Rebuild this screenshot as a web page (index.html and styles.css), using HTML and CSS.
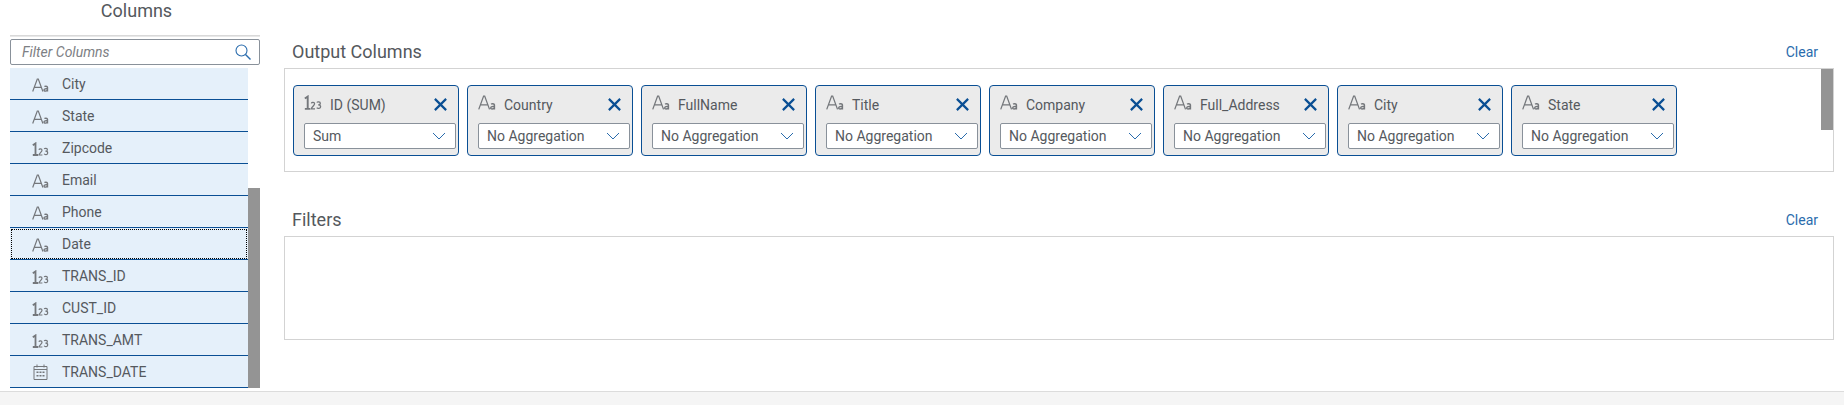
FILE: index.html
```html
<!DOCTYPE html>
<html lang="en">
<head>
<meta charset="utf-8">
<title>Columns</title>
<link rel="stylesheet" href="styles.css">
</head>
<body>
<svg class="sprite" width="0" height="0" aria-hidden="true">
  <symbol id="i-text" viewBox="0 0 17 14">
    <path d="M.7 13.500 5.300 1h1l4.600 12.500M2.300 9.300h7.400" fill="none" stroke="currentColor" stroke-width="1.200"/>
    <path d="M12.400 8.600c.5-.5 2.900-.8 3.100.7v4.200M15.500 10.800c-1.600-.2-3.500.1-3.500 1.300 0 1.500 2.500 1.300 3.500 0" fill="none" stroke="currentColor" stroke-width="1.400"/>
  </symbol>
  <symbol id="i-num" viewBox="0 0 17 14">
    <path d="M.8 3.200 3.500 1.400V13M.8 13h5.200" fill="none" stroke="currentColor" stroke-width="1.800"/>
    <path d="M6.900 7.800c.4-1.200 3.100-1.200 3.100.4 0 1.500-2.700 3-3.100 4.800h3.500M12.200 7c.5-.9 3.200-.9 3.200.7 0 1.100-1.100 1.500-2 1.500 1 0 2.300.4 2.300 1.800 0 1.900-2.900 2-3.600.8" fill="none" stroke="currentColor" stroke-width="1.200"/>
  </symbol>
  <symbol id="i-cal" viewBox="0 0 14 16">
    <path d="M.5 2.500h13v13H.5zM.5 5.500h13M3.500.5v3M10.500.5v3" fill="none" stroke="currentColor"/>
    <path d="M3 7.500h2v1.500H3zM6 7.500h2v1.500H6zM9 7.500h2v1.500H9zM3 11h2v1.500H3zM6 11h2v1.500H6zM9 11h2v1.500H9z" fill="currentColor"/>
  </symbol>
  <symbol id="i-x" viewBox="0 0 12 12">
    <path d="M.8.800l10.400 10.400M11.200.800.800 11.200" fill="none" stroke="currentColor" stroke-width="2"/>
  </symbol>
  <symbol id="i-chev" viewBox="0 0 14 8">
    <path d="M1 1l6 6 6-6" fill="none" stroke="currentColor"/>
  </symbol>
  <symbol id="i-search" viewBox="0 0 16 16">
    <circle cx="6.500" cy="6.500" r="5.500" fill="none" stroke="currentColor" stroke-width="1.100"/>
    <path d="M10.500 10.500l5 5" fill="none" stroke="currentColor" stroke-width="1.400"/>
  </symbol>
</svg>

<main class="page">
  <aside class="side">
    <h2 class="side-title">Columns</h2>
    <div class="search">
      <span class="search-text">Filter Columns</span>
      <svg class="search-icon"><use href="#i-search"/></svg>
    </div>
    <div class="list-wrap">
      <ul class="list">
        <li class="row"><svg class="type"><use href="#i-text"/></svg><span>City</span></li>
        <li class="row"><svg class="type"><use href="#i-text"/></svg><span>State</span></li>
        <li class="row"><svg class="type"><use href="#i-num"/></svg><span>Zipcode</span></li>
        <li class="row"><svg class="type"><use href="#i-text"/></svg><span>Email</span></li>
        <li class="row"><svg class="type"><use href="#i-text"/></svg><span>Phone</span></li>
        <li class="row row-focus"><svg class="type"><use href="#i-text"/></svg><span>Date</span></li>
        <li class="row"><svg class="type"><use href="#i-num"/></svg><span>TRANS_ID</span></li>
        <li class="row"><svg class="type"><use href="#i-num"/></svg><span>CUST_ID</span></li>
        <li class="row"><svg class="type"><use href="#i-num"/></svg><span>TRANS_AMT</span></li>
        <li class="row"><svg class="type type-cal"><use href="#i-cal"/></svg><span>TRANS_DATE</span></li>
      </ul>
      <div class="list-thumb"></div>
    </div>
  </aside>

  <section class="content">
    <div class="section-head head-output">
      <h3 class="section-title">Output Columns</h3>
      <a class="clear">Clear</a>
    </div>
    <div class="box box-output">
      <div class="card">
        <div class="card-top"><svg class="card-type"><use href="#i-num"/></svg><span class="card-name">ID (SUM)</span><svg class="card-x"><use href="#i-x"/></svg></div>
        <div class="select"><span>Sum</span><svg class="chev"><use href="#i-chev"/></svg></div>
      </div>
      <div class="card">
        <div class="card-top"><svg class="card-type"><use href="#i-text"/></svg><span class="card-name">Country</span><svg class="card-x"><use href="#i-x"/></svg></div>
        <div class="select"><span>No Aggregation</span><svg class="chev"><use href="#i-chev"/></svg></div>
      </div>
      <div class="card">
        <div class="card-top"><svg class="card-type"><use href="#i-text"/></svg><span class="card-name">FullName</span><svg class="card-x"><use href="#i-x"/></svg></div>
        <div class="select"><span>No Aggregation</span><svg class="chev"><use href="#i-chev"/></svg></div>
      </div>
      <div class="card">
        <div class="card-top"><svg class="card-type"><use href="#i-text"/></svg><span class="card-name">Title</span><svg class="card-x"><use href="#i-x"/></svg></div>
        <div class="select"><span>No Aggregation</span><svg class="chev"><use href="#i-chev"/></svg></div>
      </div>
      <div class="card">
        <div class="card-top"><svg class="card-type"><use href="#i-text"/></svg><span class="card-name">Company</span><svg class="card-x"><use href="#i-x"/></svg></div>
        <div class="select"><span>No Aggregation</span><svg class="chev"><use href="#i-chev"/></svg></div>
      </div>
      <div class="card">
        <div class="card-top"><svg class="card-type"><use href="#i-text"/></svg><span class="card-name">Full_Address</span><svg class="card-x"><use href="#i-x"/></svg></div>
        <div class="select"><span>No Aggregation</span><svg class="chev"><use href="#i-chev"/></svg></div>
      </div>
      <div class="card">
        <div class="card-top"><svg class="card-type"><use href="#i-text"/></svg><span class="card-name">City</span><svg class="card-x"><use href="#i-x"/></svg></div>
        <div class="select"><span>No Aggregation</span><svg class="chev"><use href="#i-chev"/></svg></div>
      </div>
      <div class="card">
        <div class="card-top"><svg class="card-type"><use href="#i-text"/></svg><span class="card-name">State</span><svg class="card-x"><use href="#i-x"/></svg></div>
        <div class="select"><span>No Aggregation</span><svg class="chev"><use href="#i-chev"/></svg></div>
      </div>
      <div class="box-thumb"></div>
    </div>
    <div class="section-head head-filters">
      <h3 class="section-title">Filters</h3>
      <a class="clear">Clear</a>
    </div>
    <div class="box box-filters"></div>
  </section>
</main>
<footer class="footer"></footer>
</body>
</html>
```

FILE: styles.css
```css
* { box-sizing: border-box; }
html, body { margin: 0; padding: 0; }
body {
  width: 1844px;
  height: 405px;
  overflow: hidden;
  background: #fff;
  color: #32363a;
  font-family: Roboto, "Liberation Sans", sans-serif;
  font-size: 14px;
}
.sprite { position: absolute; }

.page { display: flex; height: 391px; }

.side { width: 250px; margin-left: 10px; flex: none; }
.side-title {
  margin: 0;
  height: 36px;
  padding-left: 3px;
  border-bottom: 1px solid #d9d9d9;
  box-shadow: 0 1px 0 #e8e8e8;
  font-size: 18px;
  font-weight: 400;
  line-height: 21px;
  text-align: center;
  color: #54585d;
}
.search {
  display: flex;
  align-items: center;
  justify-content: space-between;
  height: 26px;
  margin-top: 3px;
  padding: 0 8px 0 11px;
  border: 1px solid #89919a;
  border-radius: 2px;
  background: #fff;
}
.search-text { font-style: italic; color: #7d8084; }
.search-icon { width: 16px; height: 16px; color: #2a6cad; }

.list-wrap { position: relative; margin-top: 3px; height: 320px; }
.list { margin: 0; padding: 0 12px 0 0; list-style: none; }
.row {
  display: flex;
  align-items: center;
  height: 32px;
  padding-left: 22px;
  background: #e5f0fa;
  border-bottom: 1px solid #0a4f94;
  color: #55595e;
}
.row-focus { outline: 1px dotted #000; outline-offset: -2px; }
.type { width: 17px; height: 14px; margin-top: 2px; margin-right: 13px; color: #74777b; flex: none; }
.type-cal { height: 16px; margin-top: 1px; }
.list-thumb {
  position: absolute;
  right: 0;
  top: 120px;
  bottom: 0;
  width: 12px;
  background: #949494;
}

.content { flex: 1; margin-left: 24px; margin-right: 10px; min-width: 0; }
.section-head {
  display: flex;
  align-items: center;
  justify-content: space-between;
  padding: 0 16px 0 8px;
}
.head-output { height: 24px; margin-top: 40px; }
.head-filters { height: 24px; margin-top: 36px; }
.section-title { margin: -2px 0 0; font-size: 18px; font-weight: 400; color: #54585d; }
.clear { color: #2a6cad; }

.box { position: relative; border: 1px solid #d3d3d3; background: #fff; margin-top: 4px; }
.box-output { display: flex; gap: 8px; height: 104px; padding: 16px 0 0 8px; }
.box-filters { height: 104px; }
.box-thumb {
  position: absolute;
  right: 0;
  top: 0;
  width: 12px;
  height: 61px;
  background: #949494;
}

.card {
  width: 166px;
  height: 71px;
  padding: 0 2px 0 10px;
  border: 1px solid #0a4f94;
  border-radius: 4px;
  background: #ebebeb;
}
.card-top { display: flex; align-items: center; height: 37px; position: relative; }
.card-type { width: 18px; height: 15px; margin-top: -4px; margin-right: 8px; color: #74777b; flex: none; }
.card-name { color: #55595e; }
.card-x { width: 13px; height: 13px; margin-left: auto; margin-right: 9px; color: #0a4f94; }
.select {
  display: flex;
  align-items: center;
  justify-content: space-between;
  height: 26px;
  padding: 0 9px 0 8px;
  border: 1px solid #89919a;
  border-radius: 2px;
  background: #fff;
  color: #55595e;
}
.chev { width: 14px; height: 8px; color: #2a6cad; }

.footer {
  height: 14px;
  background: #f5f5f5;
  border-top: 1px solid #dcdcdc;
}
```
